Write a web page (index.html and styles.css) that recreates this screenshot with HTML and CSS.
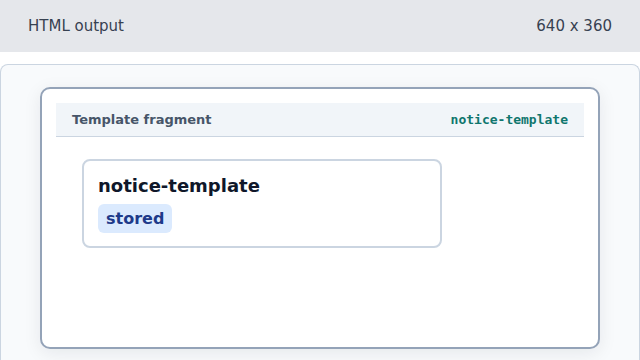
FILE: index.html
```html
<!DOCTYPE html>
<html lang="en">
<head>
  <meta charset="UTF-8" />
  <meta name="viewport" content="width=device-width, initial-scale=1.0"/>
  <title>HTML output</title>
  <link rel="stylesheet" href="styles.css">
</head>
<body>
  <div class="topbar">
    <span>HTML output</span>
    <span>640 x 360</span>
  </div>

  <div class="panel">
    <div class="frame">
      <div class="frame-head">
        <span class="frame-title">Template fragment</span>
        <code class="frame-id">notice-template</code>
      </div>

      <div class="notice">
        <h2>notice-template</h2>
        <span class="badge">stored</span>
      </div>
    </div>
  </div>
</body>
</html>
```

FILE: styles.css
```css
* {
  margin: 0;
  padding: 0;
  box-sizing: border-box;
}

body, html {
  width: 100%;
  height: 100%;
  overflow: hidden;
  font-family: 'DejaVu Sans', sans-serif;
  background-color: #fff;
}

.topbar {
  height: 52px;
  padding: 0 28px;
  background-color: #e5e7eb;
  color: #374151;
  font-size: 15px;
  display: flex;
  align-items: center;
  justify-content: space-between;
}

/* panel runs off the bottom of the window, so no bottom edge */
.panel {
  margin-top: 12px;
  height: 296px;
  padding: 22px 39px 0;
  background-color: #f8fafc;
  border: 1px solid #cbd5e1;
  border-bottom: none;
  border-radius: 8px 8px 0 0;
}

.frame {
  height: 262px;
  padding: 14px;
  background-color: #fff;
  border: 2px solid #94a3b8;
  border-radius: 10px;
  box-shadow: 0 4px 18px rgba(15, 23, 42, 0.08);
}

.frame-head {
  height: 34px;
  padding: 0 16px;
  background-color: #f1f5f9;
  border-bottom: 1px solid #cbd5e1;
  display: flex;
  align-items: center;
  justify-content: space-between;
}

.frame-title {
  font-size: 13px;
  font-weight: bold;
  color: #475569;
}

.frame-id {
  font-family: 'DejaVu Sans Mono', monospace;
  font-size: 13px;
  font-weight: bold;
  color: #0f766e;
}

.notice {
  width: 360px;
  margin: 22px 0 0 26px;
  padding: 14px 14px 13px;
  border: 2px solid #cbd5e1;
  border-radius: 8px;
  display: flex;
  flex-direction: column;
  align-items: flex-start;
  gap: 8px;
}

.notice h2 {
  font-size: 18px;
  font-weight: bold;
  color: #0f172a;
}

.badge {
  padding: 5px 8px;
  background-color: #dbeafe;
  color: #1e3a8a;
  font-size: 16px;
  font-weight: bold;
  border-radius: 6px;
}
```
